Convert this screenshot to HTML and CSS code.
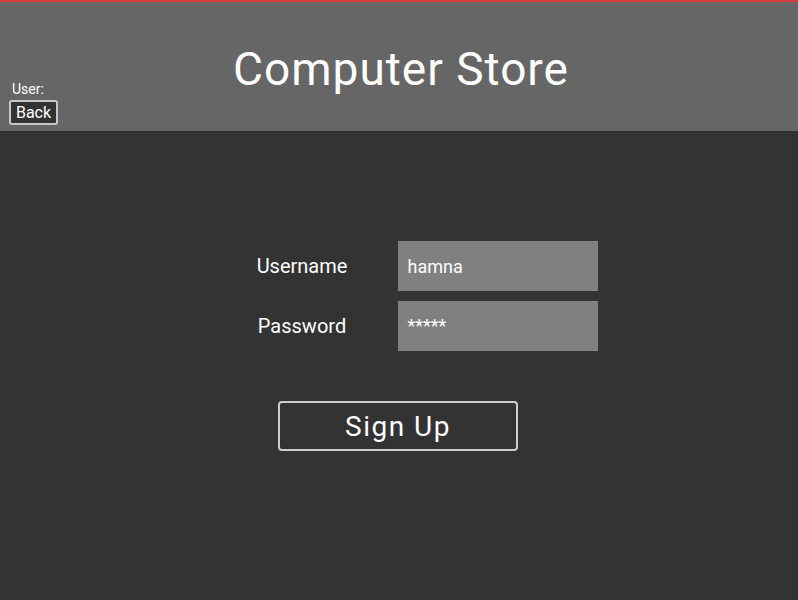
FILE: index.html
```html
<!DOCTYPE html>
<html>
<head>
<meta charset="utf-8">
<link rel="stylesheet" href="styles.css">
</head>
<body>
<header class="header">
  <div class="user-box">
    <div class="user-label">User:</div>
    <button class="back-btn">Back</button>
  </div>
  <h1 class="title">Computer Store</h1>
</header>
<main class="main">
  <div class="form">
    <label class="label">Username</label>
    <div class="input">hamna</div>
    <label class="label">Password</label>
    <div class="input pw">*****</div>
  </div>
  <button class="signup">Sign Up</button>
</main>
</body>
</html>
```
FILE: styles.css
```css
* { box-sizing: border-box; }
html, body { margin: 0; padding: 0; }
body {
  background: #333333;
  font-family: Roboto, "Liberation Sans", sans-serif;
  color: #ffffff;
  width: 798px;
  height: 600px;
  overflow: hidden;
}
.header {
  position: relative;
  height: 131px;
  background: #666666;
  border-top: 2px solid #d9393b;
  display: flex;
  justify-content: center;
  align-items: center;
}
.title {
  margin: 0;
  font-weight: 400;
  font-size: 46px;
  letter-spacing: 1px;
  line-height: 1;
  padding-top: 4px;
  transform: translateX(2px);
}
.user-box {
  position: absolute;
  left: 9px;
  top: 79px;
  display: flex;
  flex-direction: column;
  align-items: flex-start;
}
.user-label {
  font-size: 14px;
  line-height: 16px;
  margin-left: 3px;
  margin-bottom: 3px;
}
.back-btn {
  font-family: inherit;
  background: #333333;
  color: #ffffff;
  border: 2px solid #c8c8c8;
  border-radius: 3px;
  font-size: 16px;
  line-height: 18px;
  height: 25px;
  width: 49px;
  padding: 1px 0 0 0;
}
.main {
  display: flex;
  flex-direction: column;
  align-items: center;
  padding-top: 110px;
}
.form {
  display: grid;
  grid-template-columns: 199px 200px;
  grid-auto-rows: 50px;
  row-gap: 10px;
  transform: translateX(-1px);
}
.label {
  display: flex;
  align-items: center;
  justify-content: center;
  font-size: 20px;
  padding-left: 8px;
}
.input {
  background: #808080;
  display: flex;
  align-items: center;
  padding-left: 10px;
  font-size: 18px;
}
.input.pw { align-items: flex-start; padding-top: 14px; }
.signup {
  margin-top: 50px;
  width: 240px;
  height: 50px;
  background: #333333;
  color: #ffffff;
  border: 2px solid #cccccc;
  border-radius: 4px;
  font-family: inherit;
  font-size: 28px;
  letter-spacing: 1.5px;
  padding: 0;
  transform: translateX(-1px);
}
```
